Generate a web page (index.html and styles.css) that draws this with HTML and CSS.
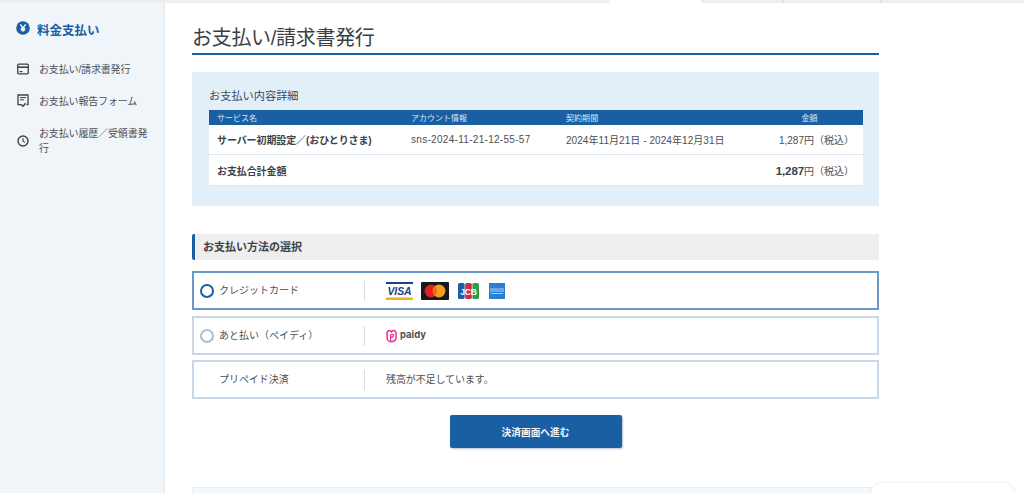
FILE: index.html
```html
<!DOCTYPE html>
<html lang="ja">

<head>
    <meta charset="UTF-8">
    <meta name="viewport" content="width=device-width, initial-scale=1.0">
    <title>お支払い/請求書発行</title>
    <link rel="stylesheet" href="styles.css">
</head>

<body>

    <div class="topbar">
        <div class="tab tab-a"></div>
        <div class="tab tab-active"></div>
        <div class="tab tab-b"></div>
        <div class="tab tab-c"></div>
        <div class="tab tab-d"></div>
    </div>

    <div class="wrap">
        <aside class="sidebar">
            <div class="side-title">
                <svg width="14" height="14" viewBox="0 0 14 14">
                    <circle cx="7" cy="7" r="6.8" fill="#1a5fa4" />
                    <path d="M4.3 3.4 7 7l2.7-3.6M7 7v3.8M4.8 7.4h4.4M4.8 9h4.4" fill="none" stroke="#fff" stroke-width="1.3" />
                </svg>
                <span>料金支払い</span>
            </div>
            <ul class="side-menu">
                <li>
                    <svg width="12" height="12" viewBox="0 0 12 12">
                        <rect x="0.7" y="1.2" width="10.6" height="9.6" rx="1" fill="none" stroke="#3b4248" stroke-width="1.3" />
                        <path d="M1 4.2h10" stroke="#3b4248" stroke-width="1.6" />
                        <path d="M2.5 8.6h3" stroke="#3b4248" stroke-width="1.2" />
                    </svg>
                    <span>お支払い/請求書発行</span>
                </li>
                <li>
                    <svg width="12" height="14" viewBox="0 0 12 14">
                        <path d="M4 10.6H1V1h10v9.6H9.6" fill="none" stroke="#3b4248" stroke-width="1.3" />
                        <path d="M3 3.6h6M3 5.8h4" stroke="#3b4248" stroke-width="1" />
                        <path d="M4.2 10.4l1.7 1.8 2.8-3" fill="none" stroke="#3b4248" stroke-width="1.4" />
                    </svg>
                    <span>お支払い報告フォーム</span>
                </li>
                <li class="tall">
                    <svg width="12" height="12" viewBox="0 0 12 12">
                        <circle cx="6" cy="6" r="5" fill="none" stroke="#3b4248" stroke-width="1.4" />
                        <path d="M6 3v3.2l2 1.2" fill="none" stroke="#3b4248" stroke-width="1.1" />
                    </svg>
                    <span>お支払い履歴／受領書発行</span>
                </li>
            </ul>
        </aside>

        <main class="content">
            <h1>お支払い/請求書発行</h1>

            <section class="detail">
                <h2>お支払い内容詳細</h2>
                <div class="detail-table">
                    <div class="row head">
                        <div class="col-name">サービス名</div>
                        <div class="col-account">アカウント情報</div>
                        <div class="col-term">契約期間</div>
                        <div class="col-price">金額</div>
                    </div>
                    <div class="row body">
                        <div class="col-name"><b>サーバー初期設定／(おひとりさま)</b></div>
                        <div class="col-account latin">sns-2024-11-21-12-55-57</div>
                        <div class="col-term">2024年11月21日 - 2024年12月31日</div>
                        <div class="col-price">1,287円（税込）</div>
                    </div>
                    <div class="row body total">
                        <div class="col-name"><b>お支払合計金額</b></div>
                        <div class="col-price"><b class="sum">1,287</b>円（税込）</div>
                    </div>
                </div>
            </section>

            <h3>お支払い方法の選択</h3>

            <div class="option selected">
                <div class="opt-label"><span class="radio"></span><span class="opt-text">クレジットカード</span></div>
                <div class="opt-value">
                    <svg class="card visa" width="27" height="18" viewBox="0 0 27 18">
                        <rect width="27" height="2" fill="#1d3f87" />
                        <rect y="15.5" width="27" height="2.5" fill="#f2ae1c" />
                        <text x="13.5" y="13" text-anchor="middle" class="visa-text">VISA</text>
                    </svg>
                    <svg class="card" width="28" height="18" viewBox="0 0 28 18">
                        <rect width="28" height="18" rx="1" fill="#15191f" />
                        <circle cx="10" cy="9" r="6.4" fill="#e3201d" />
                        <circle cx="18" cy="9" r="6.4" fill="#f69c1b" />
                        <path d="M14 4.3a6.4 6.4 0 0 1 0 9.4 6.4 6.4 0 0 1 0-9.4z" fill="#f3661d" />
                    </svg>
                    <svg class="card" width="21" height="16" viewBox="0 0 21 16">
                        <rect width="6.6" height="16" rx="1.6" fill="#1c5ca8" />
                        <rect x="7.2" width="6.6" height="16" rx="1.6" fill="#cf2d3f" />
                        <rect x="14.4" width="6.6" height="16" rx="1.6" fill="#2f9e4c" />
                        <text x="10.5" y="11.5" text-anchor="middle" class="jcb-text">JCB</text>
                    </svg>
                    <svg class="card" width="16" height="16" viewBox="0 0 16 16">
                        <rect width="16" height="16" fill="#2a7fd0" />
                        <path d="M1 6h14M1 8h14M2 10.5h12" stroke="#a9d0f2" stroke-width="1.2" />
                    </svg>
                </div>
            </div>

            <div class="option second">
                <div class="opt-label"><span class="radio off"></span><span class="opt-text">あと払い（ペイディ）</span></div>
                <div class="opt-value">
                    <svg class="paidy-mark" width="11" height="14" viewBox="0 0 11 14">
                        <path d="M1.1 4C1.1 1.5 4.2 .8 5.4 2.8 6.6 .6 10 1.2 10 4.2v4.6c0 2.8-3 4.2-5 4C3 12.6 1.1 11 1.1 9z" fill="none" stroke="#ea2b95" stroke-width="1.5" />
                        <path d="M4.6 12V6.5c0-1.5 2.9-1.9 2.9 0 0 1.5-1.5 1.7-2.5 1.5" fill="none" stroke="#ea2b95" stroke-width="1.2" />
                    </svg>
                    <span class="paidy opt-text">paidy</span>
                </div>
            </div>

            <div class="option">
                <div class="opt-label no-radio"><span class="opt-text">プリペイド決済</span></div>
                <div class="opt-value"><span class="opt-text">残高が不足しています。</span></div>
            </div>

            <div class="actions">
                <button type="button">決済画面へ進む</button>
            </div>

            <div class="next-box"></div>
        </main>
    </div>

    <div class="chat">
        <svg width="12" height="12" viewBox="0 0 12 12">
            <circle cx="6" cy="6" r="6" fill="#1a5fa4" />
        </svg>
    </div>

</body>

</html>
```

FILE: styles.css
```css
* {
    margin: 0;
    padding: 0;
    box-sizing: border-box;
    font-family: "Liberation Sans", "Noto Sans CJK JP", sans-serif;
}

html,
body {
    height: 493px;
    overflow: hidden;
}

body {
    background-color: #fff;
    color: #3c4248;
    position: relative;
}

.topbar {
    display: flex;
    height: 3px;
    background-color: #eee;
}

.tab {
    height: 3px;
}

.tab-a {
    width: 609px;
}

.tab-active {
    width: 92px;
    background-color: #fff;
}

.tab-b {
    width: 83px;
    border-right: 1px solid #ddd;
}

.tab-c {
    width: 97px;
    border-right: 1px solid #ddd;
}

.wrap {
    display: flex;
    height: 490px;
}

/* sidebar */
.sidebar {
    width: 165px;
    flex-shrink: 0;
    background-color: #f0f5f9;
    border-right: 1px solid #e3e9ef;
    padding: 18px 8px 0 16px;
}

.side-title {
    display: flex;
    align-items: flex-start;
    gap: 7px;
    color: #1a5fa4;
    font-size: 12.5px;
    font-weight: 700;
    line-height: 20px;
}

.side-menu {
    list-style: none;
    margin-top: 12px;
}

.side-menu li {
    display: flex;
    align-items: center;
    gap: 10px;
    min-height: 32px;
    padding-left: 1px;
    font-size: 10px;
    line-height: 15px;
    color: #4c5258;
    letter-spacing: -0.15px;
}

.side-menu li svg {
    flex-shrink: 0;
}

.side-menu li.tall {
    margin-top: 9px;
    min-height: 30px;
}

/* main */
.content {
    width: 714px;
    padding-left: 27px;
}

h1 {
    font-size: 20px;
    font-weight: 400;
    line-height: 28px;
    height: 52px;
    padding-top: 21px;
    border-bottom: 2px solid #1a5fa4;
    color: #3a3f45;
    letter-spacing: -0.3px;
}

.detail {
    margin-top: 17px;
    height: 134px;
    background-color: #e2eff9;
    padding: 17px 16px 0 17px;
}

h2 {
    font-size: 11.2px;
    font-weight: 400;
    line-height: 15px;
    color: #3e4a57;
}

.detail-table {
    margin-top: 6px;
    background-color: #fff;
}

.row {
    display: flex;
    align-items: center;
    font-size: 10px;
    color: #4a4f55;
}

.row.head {
    height: 15px;
    background-color: #1a5fa4;
    color: #dbe7f3;
    font-size: 8px;
}

.row.body {
    height: 30px;
    border-bottom: 1px solid #dde8f2;
}

.row.total {
    height: 31px;
}

.row b {
    color: #3c4248;
    letter-spacing: -0.1px;
}

.col-name {
    width: 194px;
    margin-left: 8px;
}

.col-account {
    width: 155px;
}

.latin {
    letter-spacing: 0.3px;
}

.col-term {
    width: 185px;
    letter-spacing: 0.06px;
}

.col-price {
    flex: 1;
    text-align: right;
    padding-right: 9px;
}

.row.head .col-price {
    text-align: center;
    padding-right: 0;
    padding-left: 5px;
}

.row.total .col-name {
    flex: 1;
}

.row.total .col-price {
    flex: none;
}

.sum {
    font-size: 11.5px;
}

h3 {
    margin-top: 28px;
    height: 26px;
    line-height: 27px;
    background-color: #eee;
    border-left: 3px solid #1a5fa4;
    border-radius: 2px 0 0 2px;
    padding-left: 8px;
    font-size: 11px;
    font-weight: 700;
    color: #3c4248;
}

.option {
    display: flex;
    align-items: center;
    height: 39px;
    margin-top: 5px;
    border: 2px solid #c8d7e8;
    font-size: 10px;
    color: #4c5258;
}

.option.selected {
    margin-top: 11px;
    border-color: #6d97c9;
}

.option.second {
    margin-top: 6px;
}

.opt-label {
    display: flex;
    align-items: center;
    width: 171px;
    height: 20px;
    padding-left: 6px;
    border-right: 1px solid #d5dfe9;
}

.opt-label.no-radio {
    padding-left: 25px;
    letter-spacing: -0.05px;
}

.opt-text {
    margin-bottom: 2px;
}

.radio {
    width: 14px;
    height: 14px;
    border: 2px solid #1a5fa4;
    border-radius: 50%;
    margin-right: 5px;
    flex-shrink: 0;
}

.radio.off {
    border-color: #a9bfd6;
}

.opt-value {
    display: flex;
    align-items: center;
    padding-left: 21px;
    letter-spacing: -0.1px;
}

.card {
    margin-right: 10px;
}

.card.visa {
    margin-right: 8px;
}

.card:nth-child(2) {
    margin-right: 9px;
}

.visa-text {
    font-size: 10.5px;
    font-weight: 700;
    font-style: italic;
    fill: #1d3f87;
}

.jcb-text {
    font-size: 8.5px;
    font-weight: 700;
    fill: #fff;
}

.paidy-mark {
    margin-right: 3px;
}

.paidy {
    font-family: "Inter", sans-serif;
    font-size: 9.5px;
    font-weight: 700;
    color: #4c4f55;
    letter-spacing: 0;
}

.actions {
    display: flex;
    justify-content: center;
    margin-top: 16px;
}

button {
    width: 172px;
    height: 33px;
    background-color: #1a5fa4;
    color: #f2f6fa;
    border: none;
    border-radius: 2px;
    box-shadow: 1px 1px 2px #b5c4d4;
    font-size: 9.7px;
    font-weight: 700;
    cursor: pointer;
}

.next-box {
    margin-top: 39px;
    height: 6px;
    background-color: #f3f8fd;
    border: 1px solid #e4eef8;
    border-bottom: none;
}

/* floating widget, sits over the page corner */
.chat {
    position: absolute;
    left: 871px;
    top: 483px;
    width: 143px;
    height: 10px;
    overflow: hidden;
    background-color: #fff;
    border-radius: 14px 14px 0 0;
    box-shadow: 0 0 3px #ddd;
    padding: 8px 0 0 9px;
}
```
